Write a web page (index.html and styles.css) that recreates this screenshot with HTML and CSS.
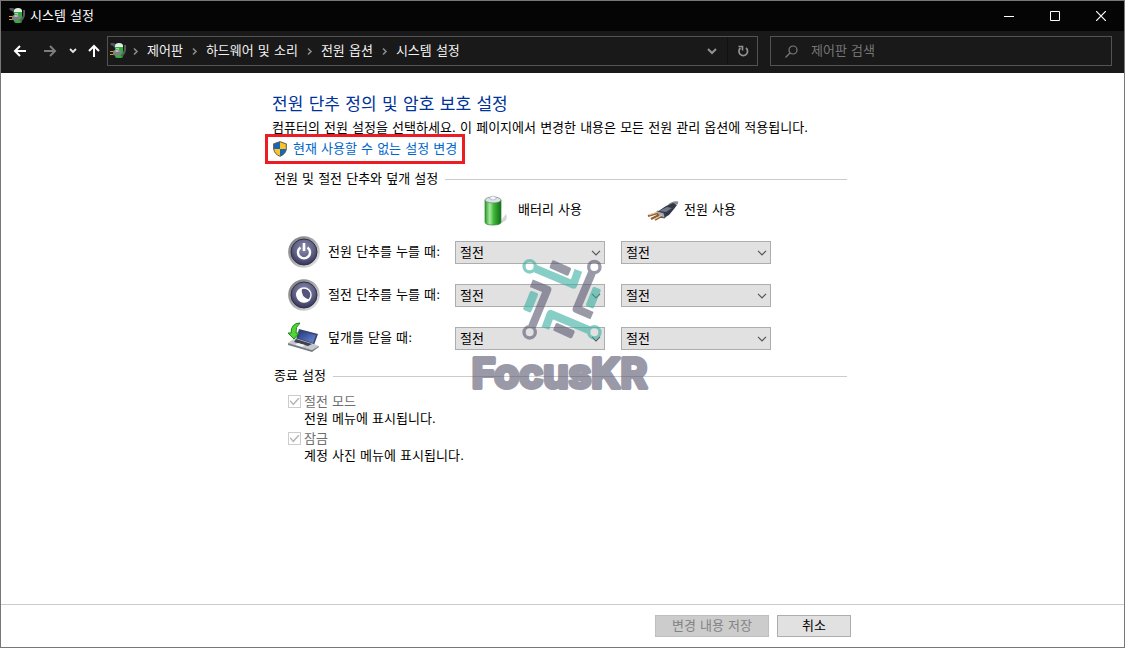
FILE: index.html
```html
<!DOCTYPE html>
<html lang="ko">
<head>
<meta charset="utf-8">
<meta name="viewport" content="width=device-width, initial-scale=1">
<title>시스템 설정</title>
<link rel="stylesheet" href="styles.css">
</head>
<body>
<svg class="defs" width="0" height="0" aria-hidden="true">
  <defs>
    <linearGradient id="green" x1="0" x2="1" y1="0" y2="0">
      <stop offset="0" stop-color="#2f9a2c"/><stop offset=".3" stop-color="#a5eb9b"/><stop offset=".55" stop-color="#3fb73a"/><stop offset="1" stop-color="#0f6d15"/>
    </linearGradient>
    <linearGradient id="ring" x1="0" x2="1" y1="0" y2="1">
      <stop offset="0" stop-color="#777"/><stop offset=".5" stop-color="#a9a9ab"/><stop offset="1" stop-color="#f0f0f0"/>
    </linearGradient>
    <radialGradient id="face" cx=".5" cy=".35" r=".65">
      <stop offset="0" stop-color="#8b8bae"/><stop offset=".6" stop-color="#606085"/><stop offset="1" stop-color="#34345a"/>
    </radialGradient>
    <linearGradient id="screen" x1="0" x2="1" y1="0" y2="1">
      <stop offset="0" stop-color="#22387e"/><stop offset="1" stop-color="#6b8bd4"/>
    </linearGradient>
    <symbol id="power-plan" viewBox="0 0 16 16">
      <path d="M1 2q2-2 4 1l2 3" fill="none" stroke="#4d5357" stroke-width="3"/>
      <rect x="5" y="2" width="8" height="13" rx="2" fill="#35ad3c"/>
      <path d="M6 5h3v3H6z" fill="#8ee58b"/>
      <path d="M5 3q0-3 4-3t4 3v1H5z" fill="#e4eee9"/>
      <path d="M11 13q5-3 4-11" fill="none" stroke="#555d5c" stroke-width="2"/>
      <path d="M0 8.500h4M0 11.500h4" stroke="#d99d17" stroke-width="1"/>
      <path d="M3 8l4-2 4 2v3l-4 2-4-1z" fill="#7b7e82"/>
      <path d="M4 8l3-1 3 1-3 1z" fill="#c1c4c4"/>
    </symbol>
    <symbol id="crumb" viewBox="0 0 7 9"><path d="M2 1.500l3 3-3 3" fill="none" stroke="#8b8b8b" stroke-width="1.600"/></symbol>
    <symbol id="chevron" viewBox="0 0 10 6"><path d="M1 .8L5 4.800 9 .8" fill="none" stroke="#555" stroke-width="1.200"/></symbol>
  </defs>
</svg>

<div class="window">
  <header class="titlebar">
    <svg class="app-icon" aria-hidden="true"><use href="#power-plan"/></svg>
    <span class="title">시스템 설정</span>
    <button class="caption" aria-label="최소화"><svg width="10" height="10"><path d="M0 5.500h10" stroke="#fff"/></svg></button>
    <button class="caption" aria-label="최대화"><svg width="10" height="10"><path d="M.5 .5h9v9h-9z" fill="none" stroke="#fff"/></svg></button>
    <button class="caption" aria-label="닫기"><svg width="10" height="10"><path d="M0 0l10 10M10 0L0 10" stroke="#fff" stroke-width="1.200"/></svg></button>
  </header>

  <nav class="navbar">
    <div class="history">
      <button aria-label="뒤로"><svg width="14" height="12"><path d="M13 6H2M7 1L2 6l5 5" fill="none" stroke="#fff" stroke-width="2"/></svg></button>
      <button aria-label="앞으로"><svg width="14" height="12"><path d="M1 6h11M7 1l5 5-5 5" fill="none" stroke="#7c7c7c" stroke-width="2"/></svg></button>
      <button class="narrow" aria-label="최근 위치"><svg width="8" height="6"><path d="M1 1l3 3 3-3" fill="none" stroke="#e6e6e6" stroke-width="1.800"/></svg></button>
      <button class="up" aria-label="위로"><svg width="12" height="14"><path d="M6 13V2M1 7l5-5 5 5" fill="none" stroke="#fff" stroke-width="2"/></svg></button>
    </div>
    <div class="address">
      <svg class="app-icon" aria-hidden="true"><use href="#power-plan"/></svg>
      <ol class="crumbs">
        <li><svg class="crumb" aria-hidden="true"><use href="#crumb"/></svg><a href="#">제어판</a></li>
        <li><svg class="crumb" aria-hidden="true"><use href="#crumb"/></svg><a href="#">하드웨어 및 소리</a></li>
        <li><svg class="crumb" aria-hidden="true"><use href="#crumb"/></svg><a href="#">전원 옵션</a></li>
        <li><svg class="crumb" aria-hidden="true"><use href="#crumb"/></svg><a href="#">시스템 설정</a></li>
      </ol>
      <button class="address-button" aria-label="이전 위치"><svg width="10" height="7"><path d="M1 1l4 4 4-4" fill="none" stroke="#929292" stroke-width="2"/></svg></button>
      <button class="address-button refresh" aria-label="새로 고침"><svg width="12" height="12"><path d="M3.500 3A4.300 4.300 0 1 0 9 3" fill="none" stroke="#929292" stroke-width="1.700"/><path d="M1.500 1.500H5.500V5.500" fill="none" stroke="#929292" stroke-width="1.600"/></svg></button>
    </div>
    <label class="search">
      <svg width="13" height="13" aria-hidden="true"><circle cx="8" cy="5" r="4" fill="none" stroke="#7b7b7b" stroke-width="1.200"/><path d="M5 8L.5 12.500" stroke="#7b7b7b" stroke-width="1.300"/></svg>
      <input type="search" placeholder="제어판 검색" aria-label="제어판 검색">
    </label>
  </nav>

  <main class="content">
    <div class="column">
      <h1>전원 단추 정의 및 암호 보호 설정</h1>
      <p class="intro">컴퓨터의 전원 설정을 선택하세요. 이 페이지에서 변경한 내용은 모든 전원 관리 옵션에 적용됩니다.</p>
      <a class="admin-link" href="#">
        <svg width="16" height="16" viewBox="0 0 16 16" aria-hidden="true">
          <path d="M8 .5l6.500 2.300v5Q14 13 8 15.500 2 13 1.500 7.800v-5z" fill="#fcc324"/>
          <path d="M8 .5v7.500H1.500V2.800zM8 8h6.500Q14 13 8 15.500z" fill="#1767b9"/>
          <path d="M8 .7l6.300 2.200v5Q13.800 13 8 15.300 2.200 13 1.700 7.900v-5z" fill="none" stroke="#5b5d5e"/>
        </svg>
        <span>현재 사용할 수 없는 설정 변경</span>
      </a>

      <section>
        <h2>전원 및 절전 단추와 덮개 설정</h2>
        <div class="settings">
          <div class="mode battery">
            <svg width="32" height="32" viewBox="0 0 32 32" aria-hidden="true">
              <path d="M18 29L25 20q2 4-1 7l-5 3z" fill="#bbb" opacity=".6"/>
              <path d="M4 6v22q0 3 8 3t8-3V6z" fill="url(#green)"/>
              <path d="M4 6v22q0 3 8 3t8-3V6" fill="none" stroke="#278431" stroke-width=".7"/>
              <ellipse cx="12" cy="6" rx="8" ry="3" fill="#dbe3e8" stroke="#68826c" stroke-width=".7"/>
              <path d="M9 5V3q3-2 6 0v2q-3 2-6 0z" fill="#f3f5fa" stroke="#a2a8b0" stroke-width=".6"/>
            </svg>
            <span id="on-battery">배터리 사용</span>
          </div>
          <div class="mode plugged">
            <svg width="32" height="32" viewBox="0 0 32 32" aria-hidden="true">
              <path d="M22 12q4-4 9-3" fill="none" stroke="#858b92" stroke-width="3"/>
              <path d="M10 18l9-6 7-3 4 2-3 4-5 6-5 3-7-1z" fill="#333947"/>
              <path d="M12 17l8-4 5 1-6 4z" fill="#737b8a"/>
              <path d="M10 17l7 2 1 5-7-1z" fill="#a3a9b8" stroke="#343745" stroke-width=".7"/>
              <path d="M11 19l-10 3M12 21l-8 4M15 22l-7 4" stroke="#8b5e35" stroke-width="2"/>
              <path d="M11 18l-9 3M15 21l-7 4" stroke="#ecc38b" stroke-width="1.200"/>
            </svg>
            <span id="on-power">전원 사용</span>
          </div>

          <svg class="row-icon" width="32" height="32" viewBox="0 0 32 32" aria-hidden="true">
            <circle cx="16" cy="16" r="15.800" fill="url(#ring)"/><circle cx="16" cy="16" r="13" fill="url(#face)" stroke="#303047"/>
            <path d="M12.500 11.500a6 6 0 1 0 7 0" fill="none" stroke="#fff" stroke-width="2.400"/><path d="M16 7v8" stroke="#fff" stroke-width="2.600"/>
          </svg>
          <span class="row-label" id="power-button">전원 단추를 누를 때:</span>
          <div class="picker"><select aria-labelledby="power-button on-battery"><option>절전</option></select><svg aria-hidden="true"><use href="#chevron"/></svg></div>
          <div class="picker"><select aria-labelledby="power-button on-power"><option>절전</option></select><svg aria-hidden="true"><use href="#chevron"/></svg></div>

          <svg class="row-icon" width="32" height="32" viewBox="0 0 32 32" aria-hidden="true">
            <circle cx="16" cy="16" r="15.800" fill="url(#ring)"/><circle cx="16" cy="16" r="13" fill="url(#face)" stroke="#303047"/>
            <circle cx="16" cy="16" r="7" fill="#55557c" stroke="#fff" stroke-width="1.400"/><path d="M14 9q-2 9 8 12-3 3-8 2-6-3-6-8 1-5 6-6z" fill="#fff"/>
          </svg>
          <span class="row-label" id="sleep-button">절전 단추를 누를 때:</span>
          <div class="picker"><select aria-labelledby="sleep-button on-battery"><option>절전</option></select><svg aria-hidden="true"><use href="#chevron"/></svg></div>
          <div class="picker"><select aria-labelledby="sleep-button on-power"><option>절전</option></select><svg aria-hidden="true"><use href="#chevron"/></svg></div>

          <svg class="row-icon" width="32" height="32" viewBox="0 0 32 32" aria-hidden="true">
            <path d="M11 7l19 5-4 11-18-6z" fill="#38436b"/><path d="M12 9l16 4-3 8-15-5z" fill="url(#screen)"/>
            <path d="M7 16l19 6 5 2-7 4L0 21z" fill="#c6cad0"/><path d="M8 17l16 5-4 2-14-4z" fill="#3d424e"/>
            <path d="M10 21l7 2-3 2-7-2z" fill="#f5f5f6"/><path d="M0 21l24 7 7-4v1l-7 5-24-7z" fill="#777d85"/>
            <path d="M12 1Q3 1 3 11H0l6 6 5-6H8q-1-6 4-10z" fill="#51d434" stroke="#168b16"/>
          </svg>
          <span class="row-label" id="lid">덮개를 닫을 때:</span>
          <div class="picker"><select aria-labelledby="lid on-battery"><option>절전</option></select><svg aria-hidden="true"><use href="#chevron"/></svg></div>
          <div class="picker"><select aria-labelledby="lid on-power"><option>절전</option></select><svg aria-hidden="true"><use href="#chevron"/></svg></div>
        </div>
      </section>

      <section class="shutdown">
        <h2>종료 설정</h2>
        <div class="option">
          <input type="checkbox" id="sleep" checked disabled aria-describedby="sleep-note">
          <label for="sleep">절전 모드</label>
          <p id="sleep-note">전원 메뉴에 표시됩니다.</p>
        </div>
        <div class="option">
          <input type="checkbox" id="lock" checked disabled aria-describedby="lock-note">
          <label for="lock">잠금</label>
          <p id="lock-note">계정 사진 메뉴에 표시됩니다.</p>
        </div>
      </section>

      <svg class="watermark" viewBox="30 6 582 432" role="img" aria-label="FocusKR">
        <g fill="none" stroke-width="24" stroke-linejoin="round">
          <g stroke="#39afa3">
            <circle cx="209" cy="34" r="17" stroke-width="10"/><path d="M226 41L340 89 355 46"/>
            <circle cx="403" cy="232" r="17" stroke-width="10"/><path d="M386 225L272 177 256 220"/>
          </g>
          <g stroke="#57566f">
            <circle cx="403" cy="36" r="17" stroke-width="10"/><path d="M396 53L350 162 396 182"/>
            <circle cx="209" cy="232" r="17" stroke-width="10"/><path d="M216 215L262 104 214 85"/>
          </g>
        </g>
        <g fill="#57566f">
          <rect x="270" y="26" width="62" height="26" rx="5" transform="rotate(24 301 39)"/>
          <rect x="281" y="214" width="62" height="26" rx="5" transform="rotate(24 312 227)"/>
        </g>
        <g fill="#39afa3">
          <rect x="369" y="115" width="62" height="26" rx="5" transform="rotate(-68 400 128)"/>
          <rect x="181" y="127" width="62" height="26" rx="5" transform="rotate(-68 212 140)"/>
        </g>
        <text x="35" y="399">FocusKR</text>
      </svg>
    </div>
  </main>

  <footer class="footer">
    <div class="actions">
      <button class="save" disabled>변경 내용 저장</button>
      <button class="cancel">취소</button>
    </div>
  </footer>
</div>
</body>
</html>
```

FILE: styles.css
```css
* {
  box-sizing: border-box;
}

body {
  margin: 0;
  color: #000;
  background: #fff;
  font: 13px/20px "DejaVu Sans", "Noto Sans CJK KR", sans-serif;
}

button,
input,
select {
  margin: 0;
  font: inherit;
}

h1,
h2,
p,
ol {
  margin: 0;
  padding: 0;
  font-weight: 400;
}

a {
  color: inherit;
  text-decoration: none;
}

svg {
  display: block;
  flex: none;
}

.defs {
  position: absolute;
}

.window {
  display: flex;
  flex-direction: column;
  min-height: 100vh;
  border: 1px solid #777;
}

/* Title bar */
.titlebar {
  display: flex;
  align-items: center;
  height: 30px;
  padding-left: 8px;
  color: #fff;
  background: #050505;
}

.app-icon {
  width: 16px;
  height: 16px;
}

.title {
  flex: 1;
  padding-left: 5px;
}

.caption {
  display: grid;
  place-items: center;
  width: 46px;
  height: 30px;
  padding: 0;
  border: 0;
  background: none;
}

/* Navigation */
.navbar {
  display: flex;
  padding: 5px 12px 7px 0;
  background: #191919;
}

.history {
  display: flex;
  padding-left: 4px;
}

.history button {
  display: grid;
  place-items: center;
  width: 30px;
  height: 30px;
  padding: 0;
  border: 0;
  background: none;
}

.history .narrow {
  width: 16px;
}

.history .up {
  width: 26px;
}

.address,
.search {
  display: flex;
  align-items: center;
  height: 30px;
  border: 1px solid #535353;
}

.address {
  flex: 1;
  padding-left: 2px;
}

.crumbs {
  display: flex;
  flex: 1;
  color: #f2f2f2;
  list-style: none;
}

.crumbs li {
  display: flex;
  align-items: center;
  white-space: nowrap;
}

.crumb {
  width: 7px;
  height: 9px;
  margin: 0 8px;
}

.crumbs li:first-child .crumb {
  margin-left: 6px;
}

.address-button {
  display: grid;
  place-items: center;
  width: 30px;
  height: 28px;
  padding: 0;
  border: 0;
  background: none;
}

.refresh {
  border-left: 1px solid #111;
}

.search {
  gap: 13px;
  width: 342px;
  margin-left: 12px;
  padding-left: 14px;
}

.search input {
  flex: 1;
  min-width: 0;
  padding: 0;
  border: 0;
  outline: 0;
  color: #fff;
  background: none;
}

.search input::placeholder {
  color: #757575;
  opacity: 1;
}

/* Content */
.content {
  flex: 1;
  padding: 19px 1px 0 0;
}

.column,
.actions {
  width: 100%;
  max-width: 580px;
  margin: 0 auto;
}

.column {
  position: relative;
}

h1 {
  color: #003399;
  font-size: 17px;
  line-height: 24px;
}

.intro {
  margin-top: 2px;
}

.admin-link {
  display: flex;
  align-items: center;
  gap: 5px;
  width: 200px;
  height: 30px;
  margin: -4px 0 5px -7px;
  padding-left: 4px;
  border: 3px solid #ed1c24;
  color: #0066cc;
  white-space: nowrap;
}

h2 {
  display: flex;
  align-items: center;
  gap: 7px;
  padding: 0 5px 0 2px;
  font-size: 13px;
}

h2::after {
  flex: 1;
  height: 1px;
  background: #ccc;
  content: "";
}

.settings {
  display: grid;
  grid-template-rows: 42px repeat(3, 43px);
  grid-template-columns: 40px 127px 166px 166px;
  align-items: center;
  padding-left: 16px;
}

.mode {
  display: flex;
  align-items: center;
  gap: 5px;
  padding-left: 26px;
}

.battery {
  grid-column: 3;
}

.row-icon,
.row-label {
  margin-bottom: 2px;
}

.picker {
  display: grid;
  align-items: center;
  width: 150px;
}

.picker > * {
  grid-area: 1 / 1;
}

.picker select {
  width: 100%;
  height: 23px;
  padding: 0 20px 0 4px;
  border: 1px solid #adadad;
  border-radius: 0;
  color: #000;
  background: #e1e1e1;
  appearance: none;
}

.picker svg {
  justify-self: end;
  width: 10px;
  height: 6px;
  margin-right: 4px;
  pointer-events: none;
}

.shutdown {
  margin-top: 6px;
}

.option {
  display: grid;
  grid-template-columns: 13px 1fr;
  column-gap: 3px;
  align-items: center;
  margin-top: 3px;
  padding-left: 16px;
  line-height: 17px;
}

h2 + .option {
  margin-top: 7px;
}

.option input {
  display: grid;
  place-items: center;
  width: 13px;
  height: 13px;
  border: 1px solid #ccc;
  background: #fff;
  appearance: none;
}

.option input:checked::before {
  width: 10px;
  height: 8px;
  background: #b5b5b5;
  clip-path: polygon(0 45%, 10% 33%, 38% 72%, 90% 0, 100% 12%, 38% 100%);
  content: "";
}

.option label {
  color: #6d6d6d;
}

.option p {
  grid-column: 2;
}

.watermark {
  position: absolute;
  top: 165px;
  left: 198px;
  width: 194px;
  height: 144px;
  opacity: .6;
  pointer-events: none;
}

.watermark text {
  fill: #57566f;
  stroke: #57566f;
  stroke-width: 12px;
  stroke-linejoin: round;
  font: 700 122px Inter, sans-serif;
}

/* Footer */
.footer {
  padding: 10px 3px 10px 0;
  border-top: 1px solid #ccc;
}

.actions {
  display: flex;
  justify-content: flex-end;
  gap: 8px;
}

.actions button {
  height: 22px;
  padding: 0;
  border: 1px solid #adadad;
  color: #000;
  background: #e1e1e1;
  line-height: 20px;
}

.actions .save {
  width: 114px;
  border-color: #bfbfbf;
  color: #838383;
  background: #ccc;
}

.actions .cancel {
  width: 74px;
}
```
